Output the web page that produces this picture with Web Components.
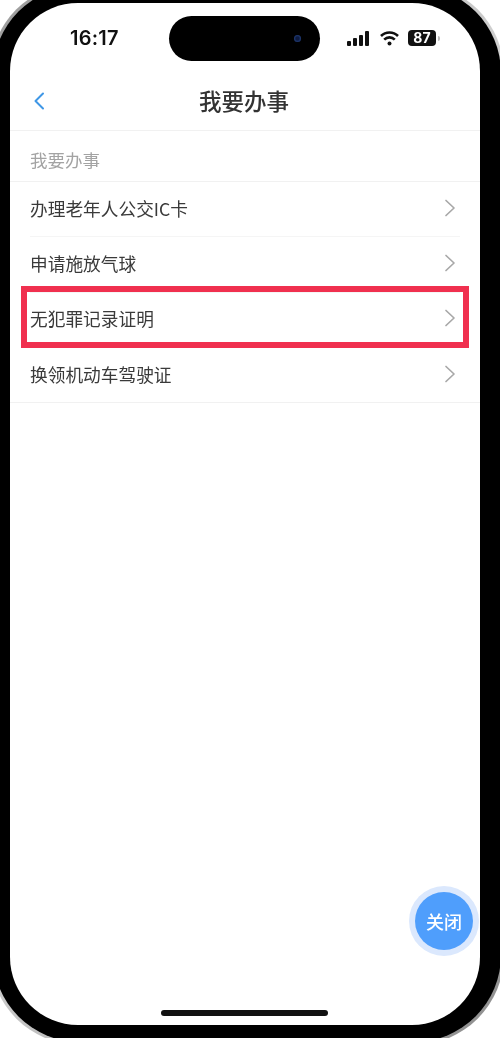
<!DOCTYPE html>
<html lang="zh">
<head>
<meta charset="utf-8">
<title>我要办事</title>
<style>
  html, body { margin: 0; padding: 0; background: #fff; overflow: hidden; }
  body { width: 500px; height: 1038px; font-family: "Noto Sans CJK SC", "Noto Sans", sans-serif; }
</style>
</head>
<body>
<phone-frame>
  <status-bar time="16:17" battery="87"></status-bar>
  <nav-bar>我要办事</nav-bar>
  <section-title>我要办事</section-title>
  <list-row>办理老年人公交IC卡</list-row>
  <list-row>申请施放气球</list-row>
  <list-row marked>无犯罪记录证明</list-row>
  <list-row last>换领机动车驾驶证</list-row>
  <close-fab>关闭</close-fab>
  <home-bar></home-bar>
</phone-frame>

<script>
class PhoneFrame extends HTMLElement {
  constructor() {
    super();
    this.attachShadow({mode: 'open'});
    this.shadowRoot.innerHTML = `
      <style>
        :host {
          display: block;
          box-sizing: border-box;
          width: 514px;
          height: 1062px;
          margin: -17px 0 0 -10px;
          padding: 3px;
          border-radius: 90px;
          background: linear-gradient(135deg, #9a9a9a, #e4e4e4 50%, #8c8c8c);
          filter: blur(.6px);
        }
        .bezel {
          box-sizing: border-box;
          height: 100%;
          padding: 17px 21px 17px 17px;
          border-radius: 87px;
          background: #000;
        }
        .screen {
          position: relative;
          display: flex;
          flex-direction: column;
          height: 100%;
          border-radius: 68px;
          background: #fff;
          overflow: hidden;
        }
      </style>
      <div class="bezel"><div class="screen"><slot></slot></div></div>
    `;
  }
}

class StatusBar extends HTMLElement {
  constructor() {
    super();
    this.attachShadow({mode: 'open'});
    this.shadowRoot.innerHTML = `
      <style>
        :host {
          display: flex;
          align-items: center;
          box-sizing: border-box;
          height: 70px;
          padding: 0 36px 0 60px;
          color: #111;
          font-family: Inter, "Liberation Sans", sans-serif;
        }
        .time { width: 99px; font-size: 20px; font-weight: 600; letter-spacing: .2px; }
        .island {
          position: relative;
          flex: none;
          width: 151px;
          height: 45px;
          border-radius: 23px;
          background: #000;
        }
        .camera {
          position: absolute;
          right: 19px;
          top: 19px;
          width: 7px;
          height: 7px;
          border-radius: 50%;
          background: radial-gradient(circle, #0d1a3f 30%, #23407f 75%);
        }
        .icons { display: flex; align-items: center; margin-left: 27px; }
        svg { display: block; }
        .wifi { margin-left: 9px; }
        .battery {
          box-sizing: border-box;
          width: 28px;
          height: 16px;
          margin-left: 8px;
          border-radius: 4px;
          background: #111;
          color: #fff;
          font-size: 14px;
          font-weight: 700;
          line-height: 16px;
          text-align: center;
        }
        .nub { width: 2px; height: 5px; margin-left: 2px; border-radius: 0 2px 2px 0; background: #bbb; }
      </style>
      <div class="time">${this.getAttribute('time')}</div>
      <div class="island"><div class="camera"></div></div>
      <div class="icons">
        <svg width="23" height="15" viewBox="0 0 23 15" fill="#111">
          <rect x="0" y="10" width="4" height="5" rx="1"/>
          <rect x="6" y="7" width="4" height="8" rx="1"/>
          <rect x="12" y="4" width="4" height="11" rx="1"/>
          <rect x="18" y="0" width="4" height="15" rx="1"/>
        </svg>
        <svg class="wifi" width="21" height="15" viewBox="0 0 21 15" fill="none" stroke="#111" stroke-width="2.6">
          <path d="M2 5A12 12 0 0 1 19 5"/>
          <path d="M5.2 8.6A7.5 7.5 0 0 1 15.8 8.6"/>
          <circle cx="10.5" cy="12.6" r="2" fill="#111" stroke="none"/>
        </svg>
        <div class="battery">${this.getAttribute('battery')}</div>
        <div class="nub"></div>
      </div>
    `;
  }
}

class NavBar extends HTMLElement {
  constructor() {
    super();
    this.attachShadow({mode: 'open'});
    this.shadowRoot.innerHTML = `
      <style>
        :host {
          position: relative;
          display: flex;
          align-items: center;
          justify-content: center;
          flex: none;
          height: 53px;
          padding: 0 2px 4px 0;
          border-bottom: 1px solid #f1f1f1;
          color: #333;
          font-size: 22.5px;
          font-weight: 500;
        }
        svg { position: absolute; left: 23px; top: 19px; }
      </style>
      <svg width="12" height="18" viewBox="0 0 12 18" fill="none" stroke="#3f97e6" stroke-width="2" stroke-linecap="round" stroke-linejoin="round">
        <path d="M10 1.5 2.5 9l7.5 7.5"/>
      </svg>
      <slot></slot>
    `;
  }
}

class SectionTitle extends HTMLElement {
  constructor() {
    super();
    this.attachShadow({mode: 'open'});
    this.shadowRoot.innerHTML = `
      <style>
        :host {
          display: flex;
          align-items: center;
          flex: none;
          height: 44px;
          padding: 6px 0 0 20px;
          border-bottom: 1px solid #f1f1f1;
          color: #a3a3a3;
          font-size: 17.5px;
        }
      </style>
      <slot></slot>
    `;
  }
}

class ListRow extends HTMLElement {
  constructor() {
    super();
    this.attachShadow({mode: 'open'});
    this.shadowRoot.innerHTML = `
      <style>
        :host {
          position: relative;
          display: block;
          flex: none;
          padding-left: 20px;
          color: #3a3a3a;
          font-size: 17.7px;
        }
        :host([last]) { padding-left: 0; }
        .row {
          display: flex;
          align-items: center;
          justify-content: space-between;
          box-sizing: border-box;
          height: 55.3px;
          padding: 0 4px 3px 0;
          margin-right: 20px;
          border-bottom: 1px solid #f5f5f5;
        }
        :host([last]) .row {
          margin-right: 0;
          padding: 0 24px 3px 20px;
          border-bottom-color: #f1f1f1;
        }
        svg { display: block; }
        .mark {
          display: none;
          position: absolute;
          left: 11px;
          right: 11px;
          top: -6.6px;
          bottom: 0;
          border: 6px solid #f0304f;
        }
        :host([marked]) .mark { display: block; }
      </style>
      <div class="row">
        <span><slot></slot></span>
        <svg width="12" height="18" viewBox="0 0 12 18" fill="none" stroke="#a8a8a8" stroke-width="1.7" stroke-linecap="round" stroke-linejoin="round">
          <path d="M2 1.5 10 9l-8 7.5"/>
        </svg>
      </div>
      <div class="mark"></div>
    `;
  }
}

class CloseFab extends HTMLElement {
  constructor() {
    super();
    this.attachShadow({mode: 'open'});
    this.shadowRoot.innerHTML = `
      <style>
        :host {
          position: absolute;
          right: 7px;
          bottom: 75px;
          display: flex;
          align-items: center;
          justify-content: center;
          width: 58px;
          height: 58px;
          border-radius: 50%;
          background: #4f9efc;
          box-shadow: 0 0 0 6px #dbe8fd;
          color: #fff;
          font-size: 18px;
          font-weight: 500;
        }
      </style>
      <slot></slot>
    `;
  }
}

class HomeBar extends HTMLElement {
  constructor() {
    super();
    this.attachShadow({mode: 'open'});
    this.shadowRoot.innerHTML = `
      <style>
        :host {
          display: block;
          flex: none;
          width: 167px;
          height: 6px;
          margin: auto auto 9px 151px;
          border-radius: 3px;
          background: #111;
        }
      </style>
    `;
  }
}

customElements.define('phone-frame', PhoneFrame);
customElements.define('status-bar', StatusBar);
customElements.define('nav-bar', NavBar);
customElements.define('section-title', SectionTitle);
customElements.define('list-row', ListRow);
customElements.define('close-fab', CloseFab);
customElements.define('home-bar', HomeBar);
</script>
</body>
</html>
